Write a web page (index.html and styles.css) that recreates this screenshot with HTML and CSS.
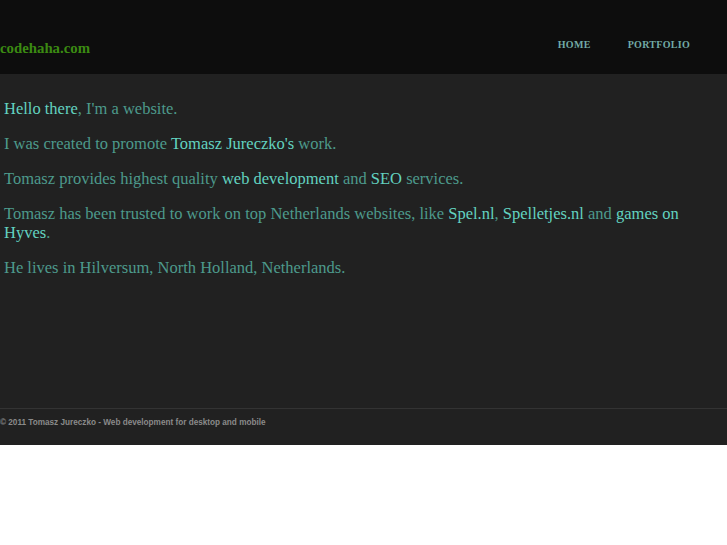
FILE: index.html
```html
<!DOCTYPE html>
<html lang="en">
<head>
    <meta charset="UTF-8">
    <title>codehaha.com - Tomasz Jureczko</title>
    <link rel="stylesheet" href="styles.css">
</head>
<body>
<div class="page">
    <header class="top">
        <a class="logo" href="#">codehaha.com</a>
        <nav class="menu">
            <a href="#">Home</a>
            <a href="#">Portfolio</a>
        </nav>
    </header>
    <div class="content">
        <p><a href="#">Hello there</a>, I'm a website.</p>
        <p>I was created to promote <a href="#">Tomasz Jureczko's</a> work.</p>
        <p>Tomasz provides highest quality <a href="#">web development</a> and <a href="#">SEO</a> services.</p>
        <p>Tomasz has been trusted to work on top Netherlands websites, like <a href="#">Spel.nl</a>, <a href="#">Spelletjes.nl</a> and <a href="#">games on</a> <a href="#">Hyves</a>.</p>
        <p>He lives in Hilversum, North Holland, Netherlands.</p>
    </div>
    <footer class="bottom">
        <p>&copy; 2011 Tomasz Jureczko - Web development for desktop and mobile</p>
    </footer>
</div>
</body>
</html>
```

FILE: styles.css
```css
body { margin: 0; background: #fff; font-family: "Liberation Serif", "Times New Roman", serif; }
a { text-decoration: none; }
.page { background-color: #212121; }

/* header */
.top { height: 74px; background-color: #0d0d0d; display: flex; justify-content: space-between; }
.logo { color: #3b8a12; font-weight: bold; font-size: 14.8px; margin-top: 40px; line-height: 17px; }
.menu { display: flex; gap: 37px; margin-top: 39px; margin-right: 37px; }
.menu a { color: #72aaa6; font-weight: bold; font-size: 10px; text-transform: uppercase; line-height: 12px; letter-spacing: 0.3px; }

/* content */
.content { min-height: 325px; padding: 9px 4px 0; color: #4d9a8c; font-size: 16.5px; line-height: 19px; }
.content p { margin: 16px 0; }
.content a { color: #63d3c0; }

/* footer */
.bottom { border-top: 1px solid #333; height: 36px; display: flex; align-items: center; }
.bottom p { margin: 0 0 10px; color: #8a8a8a; font-family: "Liberation Sans", Arial, sans-serif; font-weight: bold; font-size: 8.2px; }
```
